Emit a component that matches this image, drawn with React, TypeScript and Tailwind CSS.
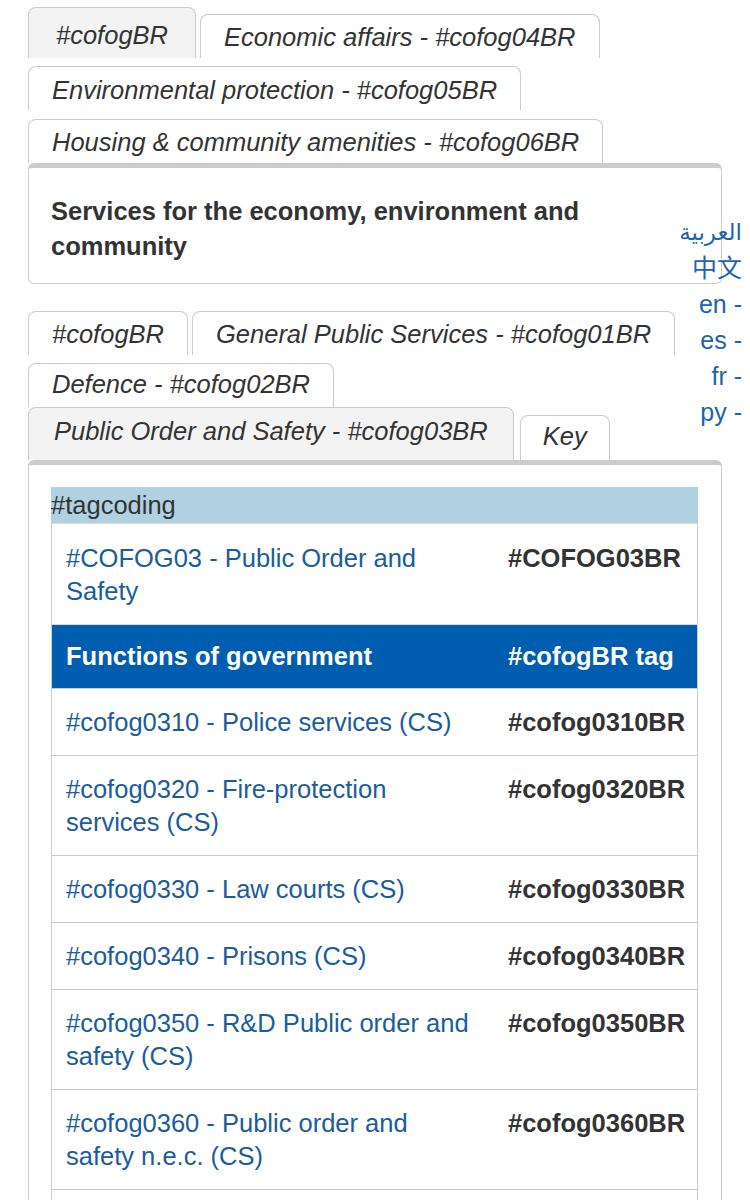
import React from 'react'

type TabProps = {
  label: string
  active?: boolean
  className?: string
}

function Tab({ label, active, className }: TabProps) {
  return (
    <div
      className={`${active ? 'bg-[#f3f3f3]' : 'bg-white'} border border-b-0 border-[#cccccc] rounded-t-[8px] italic text-[25.5px] leading-[36px] text-[#333333] whitespace-nowrap ${className ?? ''}`}
    >
      {label}
    </div>
  )
}

const rows = [
  { name: '#cofog0310 - Police services (CS)', tag: '#cofog0310BR' },
  { name: '#cofog0320 - Fire-protection services (CS)', tag: '#cofog0320BR' },
  { name: '#cofog0330 - Law courts (CS)', tag: '#cofog0330BR' },
  { name: '#cofog0340 - Prisons (CS)', tag: '#cofog0340BR' },
  { name: '#cofog0350 - R&D Public order and safety (CS)', tag: '#cofog0350BR' },
  { name: '#cofog0360 - Public order and safety n.e.c. (CS)', tag: '#cofog0360BR' },
  { name: '\u00a0', tag: '' },
]

const languages = ['中文', 'en -', 'es -', 'fr -', 'py -']

export default function App() {
  return (
    <div className="relative min-h-[1200px] bg-white font-['Liberation_Sans','DejaVu_Sans','Noto_Sans_CJK_SC',sans-serif] text-[#333333]">
      <div className="px-[28px] pt-[6px]">
        {/* first tab group */}
        <div className="flex flex-wrap items-end gap-x-1">
          <Tab label="#cofogBR" active className="h-[51px] px-[27px] pt-[9px]" />
          <Tab label="Economic affairs - #cofog04BR" className="mt-2 h-[44px] px-[23px] pt-[4px]" />
          <Tab label="Environmental protection - #cofog05BR" className="mt-2 h-[44px] px-[23px] pt-[5px]" />
          <Tab label="Housing & community amenities - #cofog06BR" className="mt-[9px] h-[44px] px-[23px] pt-[4px]" />
        </div>
        <div className="rounded-[6px] border border-t-[5px] border-[#cccccc] px-[22px] pt-[26px] pb-[19px]">
          <div className="text-[25.5px] leading-[35px] font-bold text-[#333333]">
            Services for the economy, environment and community
          </div>
        </div>

        {/* second tab group */}
        <div className="mt-[19px] flex flex-wrap items-end gap-x-1">
          <Tab label="#cofogBR" className="mt-2 h-[44px] px-[23px] pt-[4px]" />
          <Tab label="General Public Services - #cofog01BR" className="mt-2 h-[44px] px-[23px] pt-[4px]" />
          <Tab label="Defence - #cofog02BR" className="mt-2 h-[44px] px-[23px] pt-[2px]" />
          <Tab label="Public Order and Safety - #cofog03BR" active className="h-[53px] px-[25px] pt-[5px]" />
          <Tab label="Key" className="ml-[2px] mt-2 h-[45px] px-[22px] pt-[2px]" />
        </div>
        <div className="rounded-[6px] border border-t-[5px] border-[#cccccc] pl-[22px] pr-[23px] pt-[22px] pb-6">
          <div className="bg-[#b0d1e1] text-[25.5px] leading-[36px] text-[#333333]">#tagcoding</div>
          <div className="border-x border-[#cccccc] text-[25.5px] leading-[33px]">
            <div className="flex border-t border-[#dddddd] bg-white pt-[18px] pb-[16px]">
              <div className="flex-1 pl-[14px] pr-[20px] text-[#1a5c9c]">#COFOG03 - Public Order and Safety</div>
              <div className="w-[205px] shrink-0 pl-[16px] pr-[15px] font-bold text-[#333333]">#COFOG03BR</div>
            </div>
            <div className="flex border-t border-[#cfdbe8] bg-[#005db0] pt-[15px] pb-[15px] font-bold text-white">
              <div className="flex-1 pl-[14px] pr-[20px]">Functions of government</div>
              <div className="w-[205px] shrink-0 pl-[16px] pr-[15px]">#cofogBR tag</div>
            </div>
            {rows.map((row, i) => (
              <div key={i} className="flex border-t border-[#cccccc] pt-[17px] pb-[16px]">
                <div className="flex-1 pl-[14px] pr-[20px] text-[#1a5c9c]">{row.name}</div>
                <div className="w-[205px] shrink-0 pl-[16px] pr-[15px] font-bold text-[#333333]">{row.tag}</div>
              </div>
            ))}
          </div>
        </div>
      </div>

      {/* language links */}
      <div className="absolute right-[8px] top-[214px] flex flex-col items-end text-[25px] leading-[36px] text-[#1d64aa]">
        <span dir="rtl" className="whitespace-nowrap text-[23px]">العربية</span>
        {languages.map((lang) => (
          <span key={lang} className="whitespace-nowrap">{lang}</span>
        ))}
      </div>
    </div>
  )
}
